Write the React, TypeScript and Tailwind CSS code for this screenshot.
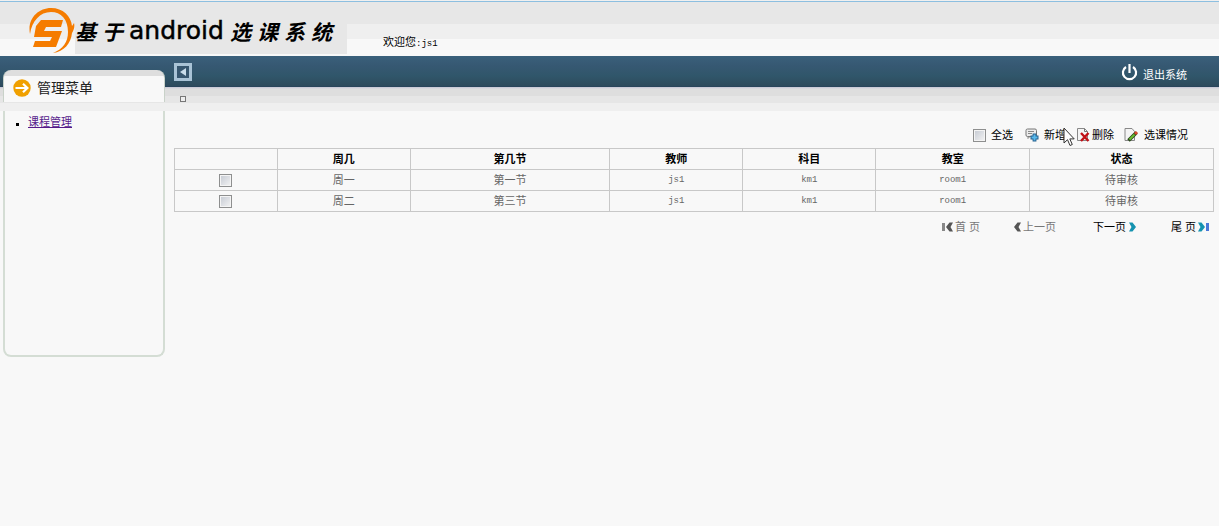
import React, { useState } from 'react';

const columns = ['周几', '第几节', '教师', '科目', '教室', '状态'];

const courses = [
  { id: 1, cells: ['周一', '第一节', 'js1', 'km1', 'room1', '待审核'] },
  { id: 2, cells: ['周二', '第三节', 'js1', 'km1', 'room1', '待审核'] },
];

const checkboxClass =
  'block appearance-none w-[13px] h-[13px] border border-[#8e8f8f] bg-gradient-to-br from-[#c4c9d2] to-[#f4f4f4] outline outline-1 -outline-offset-2 outline-[#f4f4f4] checked:from-[#4b6b8b] checked:to-[#4b6b8b]';

function Logo() {
  return (
    <svg className="w-[46px] h-[46px] shrink-0" viewBox="0 0 46 46">
      <path d="M1 26C-2 11 9 0 22 0c12 0 20 8 21 18l2-3c1 3 0 7-2 10-1 10-8 19-19 20 10-4 15-11 15-21C39 11 32 4 22 4 11 4 3 13 1 26z" fill="#f57c00" />
      <path d="M12 12h22l-2 7H17l-2 4h18l-6 16H4l2-6h15l2-4H5l2-11z" fill="#f57c00" />
    </svg>
  );
}

function Header() {
  return (
    <header className="flex h-14 bg-[linear-gradient(#f0f0f0_1px,#8dbfe0_1px,#8dbfe0_2px,#e7e7e7_2px,#e7e7e7_24px,#efefef_24px,#efefef_39px,#f8f8f8_39px)]">
      <div className="flex items-start pt-2 pl-[29px]">
        <Logo />
        <h1 className="flex h-[46px] w-[272px] items-center gap-[6px] bg-[#e7e7e7] whitespace-nowrap text-[21px] leading-[44px] text-black font-bold italic font-['Noto_Sans_CJK_SC',sans-serif]">
          <span>基</span>
          <span>于</span>
          <span className="font-['DejaVu_Sans',sans-serif] text-[25px] font-normal not-italic [-webkit-text-stroke:0.5px_black]">android</span>
          <span>选</span>
          <span>课</span>
          <span>系</span>
          <span>统</span>
        </h1>
      </div>
      <p className="pt-[34px] pl-9 text-[11px] leading-4 text-black">
        欢迎您<span className="font-['Liberation_Mono',monospace] text-[9px]">:js1</span>
      </p>
    </header>
  );
}

function Sidebar() {
  return (
    <aside className="w-[174px] shrink-0 pt-[14px] pl-[3px] pr-[9px]">
      <div className="flex h-8 items-center rounded-t-lg border-x border-[#c9d2c9] bg-[linear-gradient(#dedede_6px,#f8f8f8_6px)] pl-[9px] pt-[3px]">
        <svg className="w-[18px] h-[18px]" viewBox="0 0 18 18">
          <circle cx="9" cy="9" r="8.7" fill="#f0a000" />
          <path d="M2.5 9h12M10 4.8 14.4 9 10 13.2" fill="none" stroke="#fff" strokeWidth="2.2" />
        </svg>
        <h2 className="pl-[6px] text-[14px] leading-5 text-[#222]">管理菜单</h2>
      </div>
      <nav className="mt-[9px] h-[246px] rounded-b-lg border-2 border-t-0 border-[#d4ddd4] pt-[3px] pl-[11px]">
        <ul className="text-[11px] leading-4 text-black">
          <li className="flex items-center gap-[9px]">
            <span className="mt-1 h-[3px] w-[3px] bg-black" />
            <a href="#courses" className="text-[#551a8b] underline">课程管理</a>
          </li>
        </ul>
      </nav>
    </aside>
  );
}

function AddIcon() {
  return (
    <svg className="w-[14px] h-[14px]" viewBox="0 0 14 14">
      <rect x="1" y="1" width="10.5" height="7.5" rx="1.5" fill="#ececec" stroke="#777" />
      <path d="M3 3.5h6M3 5.5h4M3 8.5v2l2-2" fill="none" stroke="#888" />
      <path d="M9.500 5.500v8M5.500 9.500h8" stroke="#245f8c" strokeWidth="3.800" />
      <path d="M9.500 6.500v6M6.500 9.500h6" stroke="#58b9ec" strokeWidth="2" />
    </svg>
  );
}

function DeleteIcon() {
  return (
    <svg className="w-[14px] h-[14px]" viewBox="0 0 14 14">
      <path d="M1.5.5h7l3 3v9h-10z" fill="#f4f4f4" stroke="#888" />
      <path d="M8.5.5v3h3" fill="none" stroke="#777" />
      <path d="m5 5 7.500 8M12.500 5 5 13" stroke="#c01016" strokeWidth="2.400" />
    </svg>
  );
}

function EditIcon() {
  return (
    <svg className="w-[14px] h-[14px]" viewBox="0 0 14 14">
      <path d="M1 .5h7l2.500 3v9H1z" fill="#f4f4f4" stroke="#888" />
      <path d="m4.500 12.500 8-8" stroke="#27451a" strokeWidth="3.600" />
      <path d="m5.500 11.500 5-5" stroke="#6cc030" strokeWidth="1.800" />
      <path d="m11 6 2-2" stroke="#d8462c" strokeWidth="3" />
    </svg>
  );
}

function Toolbar({ allChecked, onToggleAll }: { allChecked: boolean; onToggleAll: () => void }) {
  return (
    <div className="relative flex h-6 items-center justify-end pr-[26px] text-[11px] leading-4 text-black">
      <label className="flex items-center gap-[5px]">
        <input type="checkbox" className={checkboxClass} checked={allChecked} onChange={onToggleAll} />
        全选
      </label>
      <button className="ml-3 flex items-center gap-[5px]"><AddIcon />新增</button>
      <button className="ml-[10px] flex items-center gap-[2px]"><DeleteIcon />删除</button>
      <button className="ml-[10px] flex items-center gap-[6px]"><EditIcon />选课情况</button>
      {/* pointer */}
      <svg className="absolute right-[139px] top-1 w-3 h-5 pointer-events-none" viewBox="0 0 12 20">
        <path d="M1 1v15l3.500-3.300L7 18.500l2.300-1-2.500-5.600H11.200z" fill="#fff" stroke="#333" />
      </svg>
    </div>
  );
}

function Chevron({ flip, color }: { flip?: boolean; color: string }) {
  return (
    <svg className={flip ? 'w-[7px] h-[10px] rotate-180' : 'w-[7px] h-[10px]'} viewBox="0 0 7 10">
      <path d="M0 .5h3.500L7 5 3.500 9.500H0L2.500 5z" fill={color} />
    </svg>
  );
}

function Pager() {
  return (
    <div className="flex h-[30px] items-center justify-end pr-[5px] text-[11px] leading-4 text-black">
      <button className="flex items-center text-[#777]" disabled>
        <span className="mr-px h-2 w-[3px] bg-[#888]" />
        <Chevron flip color="#555" />
        <span className="pl-[2px]">首 页</span>
      </button>
      <button className="ml-[34px] flex items-center text-[#777]" disabled>
        <Chevron flip color="#555" />
        <span className="pl-[2px]">上一页</span>
      </button>
      <button className="ml-[37px] flex items-center">
        <span className="pr-[3px]">下一页</span>
        <Chevron color="#1593b0" />
      </button>
      <button className="ml-[35px] flex items-center">
        <span className="pr-[2px]">尾 页</span>
        <Chevron color="#1593b0" />
        <span className="ml-px h-2 w-[3px] bg-[#4a78d8]" />
      </button>
    </div>
  );
}

export default function App() {
  const [selected, setSelected] = useState<number[]>([]);

  const allChecked = selected.length === courses.length;

  const toggleAll = () => {
    setSelected(allChecked ? [] : courses.map((c) => c.id));
  };

  const toggle = (id: number) => {
    setSelected(selected.includes(id) ? selected.filter((s) => s !== id) : [...selected, id]);
  };

  return (
    <div className="min-h-screen bg-[#f8f8f8] font-['Liberation_Sans','Noto_Sans_CJK_SC',sans-serif]">
      <Header />
      <div className="flex bg-no-repeat bg-[linear-gradient(#3a607b,#365872_10px,#30566a_20px,#2d4a5c_30px,#24405a_31px,#c4c4d4_31px,#dedede_33px,#dedede_40px,#e6e6e6_40px,#e6e6e6_47px,#efefef_47px,#efefef_55px,#f8f8f8_55px)]">
        <Sidebar />
        <main className="min-w-0 flex-1 pr-[5px]">
          <div className="flex h-8 items-center justify-between">
            <button aria-label="收起" className="flex h-[18px] w-[18px] items-center justify-center border-[3px] border-[#a9c3d6] bg-[#36566f]">
              <svg className="w-[6px] h-[8px]" viewBox="0 0 6 8">
                <path d="M6 0v8L0 4z" fill="#c8dcea" />
              </svg>
            </button>
            <a href="#logout" className="flex items-center gap-[5px] pr-[27px] text-[11px] leading-4 text-white">
              <svg className="w-[17px] h-[17px]" viewBox="0 0 17 17">
                <path d="M5 3a6.600 6.600 0 1 0 7 0M8.500 0v9" fill="none" stroke="#fff" strokeWidth="2.200" />
              </svg>
              <span className="pt-[5px]">退出系统</span>
            </a>
          </div>
          <div className="h-6 pt-2 pl-[6px]">
            <div className="h-[6px] w-[6px] border border-[#777] bg-[#eee]" />
          </div>
          <div className="pt-[11px]">
            <Toolbar allChecked={allChecked} onToggleAll={toggleAll} />
          </div>
          <table className="mt-px w-full table-fixed border-collapse text-center text-[11px] leading-4">
            <colgroup>
              <col className="w-[9.900%]" />
              <col className="w-[12.800%]" />
              <col className="w-[19.200%]" />
              <col className="w-[12.800%]" />
              <col className="w-[12.800%]" />
              <col className="w-[14.800%]" />
              <col />
            </colgroup>
            <thead>
              <tr className="h-[21px] text-black">
                <th className="border border-[#c8c8c8]" />
                {columns.map((name) => (
                  <th key={name} className="border border-[#c8c8c8] font-bold">{name}</th>
                ))}
              </tr>
            </thead>
            <tbody>
              {courses.map((course) => (
                <tr key={course.id} className="h-[21px] text-[#666]">
                  <td className="border border-[#c8c8c8]">
                    <input
                      type="checkbox"
                      aria-label={course.cells[0]}
                      className={`${checkboxClass} mx-auto`}
                      checked={selected.includes(course.id)}
                      onChange={() => toggle(course.id)}
                    />
                  </td>
                  {course.cells.map((cell, i) => (
                    <td
                      key={i}
                      className={
                        /^\w+$/.test(cell)
                          ? "border border-[#c8c8c8] font-['Liberation_Mono',monospace] text-[9px]"
                          : 'border border-[#c8c8c8]'
                      }
                    >
                      {cell}
                    </td>
                  ))}
                </tr>
              ))}
            </tbody>
          </table>
          <Pager />
        </main>
      </div>
    </div>
  );
}
